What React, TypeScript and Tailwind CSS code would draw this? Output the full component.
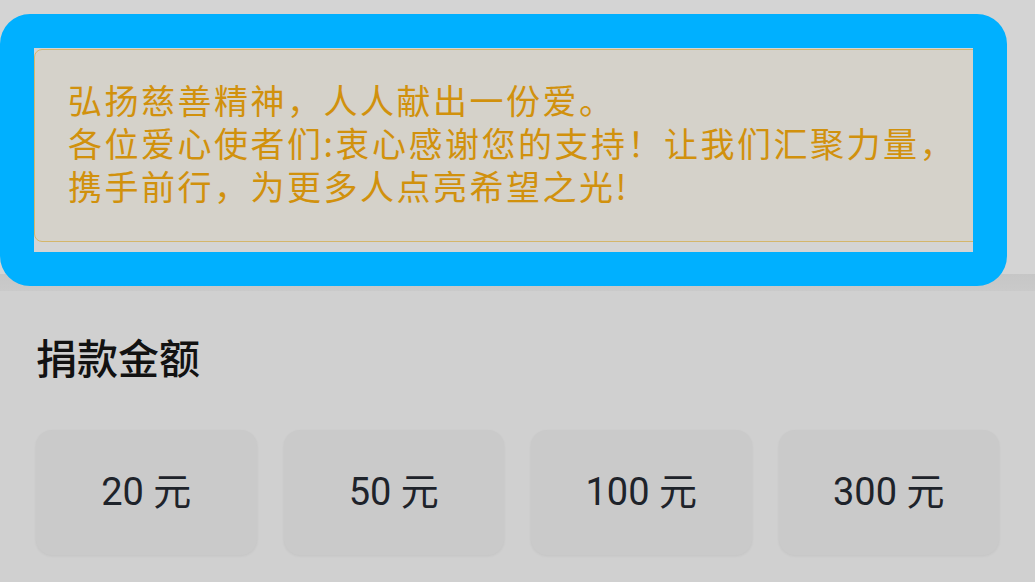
import React from 'react';

const amounts = [20, 50, 100, 300];

const lines = [
  '弘扬慈善精神，人人献出一份爱。',
  '各位爱心使者们:衷心感谢您的支持！让我们汇聚力量，',
  '携手前行，为更多人点亮希望之光!',
];

export default function App() {
  return (
    <div
      className="relative w-[1035px] h-[582px] overflow-hidden bg-[#d0d0d0]"
      style={{ fontFamily: '"Noto Sans CJK SC", "Noto Sans", sans-serif' }}
    >
      {/* notice section */}
      <div className="h-[274px] bg-[#d4d4d4] px-[34px] pt-[49px]">
        <div className="h-[193px] rounded-[8px] border border-[#d4b66c] bg-[#d5d2ca] pl-[33px] pt-[28px]">
          {lines.map((line) => (
            <div
              key={line}
              className="whitespace-nowrap text-[34px] leading-[43px] tracking-[2.5px] text-[#d1910d]"
            >
              {line}
            </div>
          ))}
        </div>
      </div>
      <div className="h-[17px] bg-gradient-to-b from-[#c6c6c6] to-[#cacaca]" />

      {/* amount section */}
      <div className="px-[36px] pt-[45px]">
        <h2 className="text-[41px] leading-[41px] font-medium text-[#121212]">捐款金额</h2>
        <div className="mt-[53px] grid grid-cols-4 gap-[27px]">
          {amounts.map((a) => (
            <button
              key={a}
              className="h-[125px] rounded-[16px] bg-[#cacaca] shadow-[0_1px_3px_rgba(0,0,0,0.06)] text-[38px] text-[#1e232a]"
              style={{ fontFamily: 'Roboto, "Noto Sans CJK SC", sans-serif' }}
            >
              {a} 元
            </button>
          ))}
        </div>
      </div>

      {/* highlight frame */}
      <div className="pointer-events-none absolute left-0 top-[14px] w-[1007px] h-[272px] rounded-[30px] border-[34px] border-[#00b0ff]" />
    </div>
  );
}
